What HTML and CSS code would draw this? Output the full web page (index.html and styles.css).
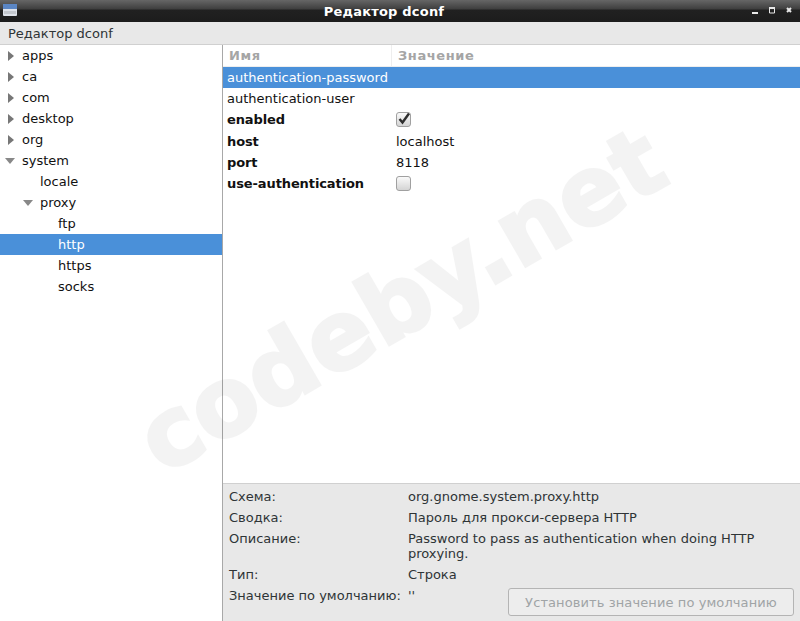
FILE: index.html
```html
<!DOCTYPE html>
<html lang="ru">
<head>
<meta charset="utf-8">
<title>Редактор dconf</title>
<link rel="stylesheet" href="styles.css">
</head>
<body>
<div class="window">
  <header class="titlebar">
    <svg class="app-icon" width="16" height="15" viewBox="0 0 16 15"><rect x="1" y="3" width="14" height="12" rx="1" fill="#dfe3ea"/><rect x="1" y="3" width="14" height="5" fill="#5b86c4"/><rect x="2" y="10" width="12" height="3" fill="#c4c8ce"/></svg>
    <span class="title">Редактор dconf</span>
    <div class="win-buttons">
      <svg width="8" height="8" viewBox="0 0 8 8"><rect x="0" y="5" width="6" height="2" fill="#e8e8e8"/></svg>
      <svg width="8" height="8" viewBox="0 0 8 8"><path d="M.5 1h5v5h-5z" fill="none" stroke="#e8e8e8"/><rect x="0" y="0" width="6" height="2" fill="#e8e8e8"/></svg>
      <svg width="8" height="8" viewBox="0 0 8 8"><path d="M1 1l4 4M5 1L1 5" stroke="#e8e8e8" stroke-width="2"/></svg>
    </div>
  </header>
  <nav class="menubar">Редактор dconf</nav>
  <main class="panes">
    <aside class="tree">
      <div class="node"><i class="arrow closed"></i>apps</div>
      <div class="node"><i class="arrow closed"></i>ca</div>
      <div class="node"><i class="arrow closed"></i>com</div>
      <div class="node"><i class="arrow closed"></i>desktop</div>
      <div class="node"><i class="arrow closed"></i>org</div>
      <div class="node"><i class="arrow open"></i>system</div>
      <div class="node lvl1"><i class="arrow"></i>locale</div>
      <div class="node lvl1"><i class="arrow open"></i>proxy</div>
      <div class="node lvl2"><i class="arrow"></i>ftp</div>
      <div class="node lvl2 selected"><i class="arrow"></i>http</div>
      <div class="node lvl2"><i class="arrow"></i>https</div>
      <div class="node lvl2"><i class="arrow"></i>socks</div>
    </aside>
    <section class="content">
      <div class="list">
        <div class="head"><div class="hname">Имя</div><div class="hval">Значение</div></div>
        <div class="row selected"><div class="name">authentication-password</div><div class="val"></div></div>
        <div class="row"><div class="name">authentication-user</div><div class="val"></div></div>
        <div class="row tall bold"><div class="name">enabled</div><div class="val"><span class="check"><svg width="14" height="14" viewBox="0 0 14 14"><path d="M2.5 7l3 3.5L12 1.5" fill="none" stroke="#2e2e2e" stroke-width="2.4"/></svg></span></div></div>
        <div class="row bold"><div class="name">host</div><div class="val">localhost</div></div>
        <div class="row bold"><div class="name">port</div><div class="val">8118</div></div>
        <div class="row tall bold"><div class="name">use-authentication</div><div class="val"><span class="check"></span></div></div>
      </div>
      <div class="details">
        <div class="label">Схема:</div><div>org.gnome.system.proxy.http</div>
        <div class="label">Сводка:</div><div>Пароль для прокси-сервера HTTP</div>
        <div class="label">Описание:</div><div>Password to pass as authentication when doing HTTP proxying.</div>
        <div class="label">Тип:</div><div>Строка</div>
        <div class="label">Значение по умолчанию:</div>
        <div class="lastcell"><span>''</span><button class="reset" disabled>Установить значение по умолчанию</button></div>
      </div>
    </section>
  </main>
  <div class="watermark">codeby.net</div>
</div>
</body>
</html>
```
FILE: styles.css
```css
* { box-sizing: border-box; }
html, body { margin: 0; padding: 0; }
body { font-family: "DejaVu Sans", sans-serif; font-size: 13px; color: #111; background: #fff; }
.window { position: relative; width: 800px; height: 621px; overflow: hidden; display: flex; flex-direction: column; }
.titlebar { position: relative; height: 22px; flex: none; display: flex; align-items: center; justify-content: center; padding-right: 32px; background: linear-gradient(#666 0, #3e3e3e 9px, #212121 10px, #1c1c1c 100%); }
.app-icon { position: absolute; left: 2px; top: 1px; }
.title { color: #fff; font-weight: bold; letter-spacing: .2px; }
.win-buttons { position: absolute; right: 6px; top: 7px; display: flex; gap: 9px; }
.menubar { height: 23px; flex: none; background: #e8e8e8; border-bottom: 1px solid #d0d0d0; padding: 4px 8px 0; color: #2e3436; }
.panes { flex: 1; display: flex; min-height: 0; }
.tree { width: 223px; flex: none; border-right: 1px solid #a8a8a8; }
.node { height: 21px; display: flex; align-items: center; padding-left: 4px; }
.node.lvl1 { padding-left: 22px; }
.node.lvl2 { padding-left: 40px; }
.arrow { width: 18px; flex: none; display: block; height: 10px; position: relative; }
.arrow.closed::before { content: ""; position: absolute; left: 4px; top: 0; border-left: 6px solid #777; border-top: 5px solid transparent; border-bottom: 5px solid transparent; }
.arrow.open::before { content: ""; position: absolute; left: 1px; top: 2px; border-top: 6px solid #888; border-left: 5px solid transparent; border-right: 5px solid transparent; }
.selected { background: #4a90d9; color: #fff; }
.content { flex: 1; display: flex; flex-direction: column; min-width: 0; }
.list { flex: 1; }
.head { height: 22px; display: flex; color: #a5a5a5; font-weight: bold; letter-spacing: .6px; border-bottom: 1px solid #eee; }
.hname { width: 169px; padding: 3px 6px 0; border-right: 1px solid #eee; }
.hval { padding: 3px 6px 0; }
.row { height: 21px; display: flex; align-items: center; }
.row.tall { height: 22px; padding-bottom: 2px; }
.name { width: 169px; flex: none; padding-left: 4px; white-space: nowrap; }
.bold .name { font-weight: bold; letter-spacing: -.1px; }
.val { padding-left: 4px; display: flex; align-items: center; }
.check { display: block; width: 15px; height: 15px; border: 1px solid #a0a0a0; border-radius: 3px; background: linear-gradient(#fafafa, #d4d4d4); position: relative; }
.check svg { position: absolute; left: 0; top: -1px; }
.details { height: 138px; flex: none; background: #e8e8e8; border-top: 1px solid #d0d0d0; padding: 5px 6px 0; display: grid; grid-template-columns: 179px 1fr; grid-auto-rows: min-content; row-gap: 6px; color: #2e3436; line-height: 15px; }
.label { white-space: nowrap; }
.lastcell { display: flex; justify-content: space-between; align-items: flex-start; }
.reset { width: 286px; height: 28px; font: inherit; color: #a0a4a6; letter-spacing: .1px; background: #ededed; border: 1px solid #b4b4b4; border-radius: 3px; }
.watermark { position: absolute; left: 101px; top: 245px; width: 600px; text-align: center; font-size: 95px; line-height: 110px; font-weight: bold; color: #000; opacity: .045; -webkit-text-stroke: 3px #000; transform: rotate(-30deg); white-space: nowrap; pointer-events: none; }
```
